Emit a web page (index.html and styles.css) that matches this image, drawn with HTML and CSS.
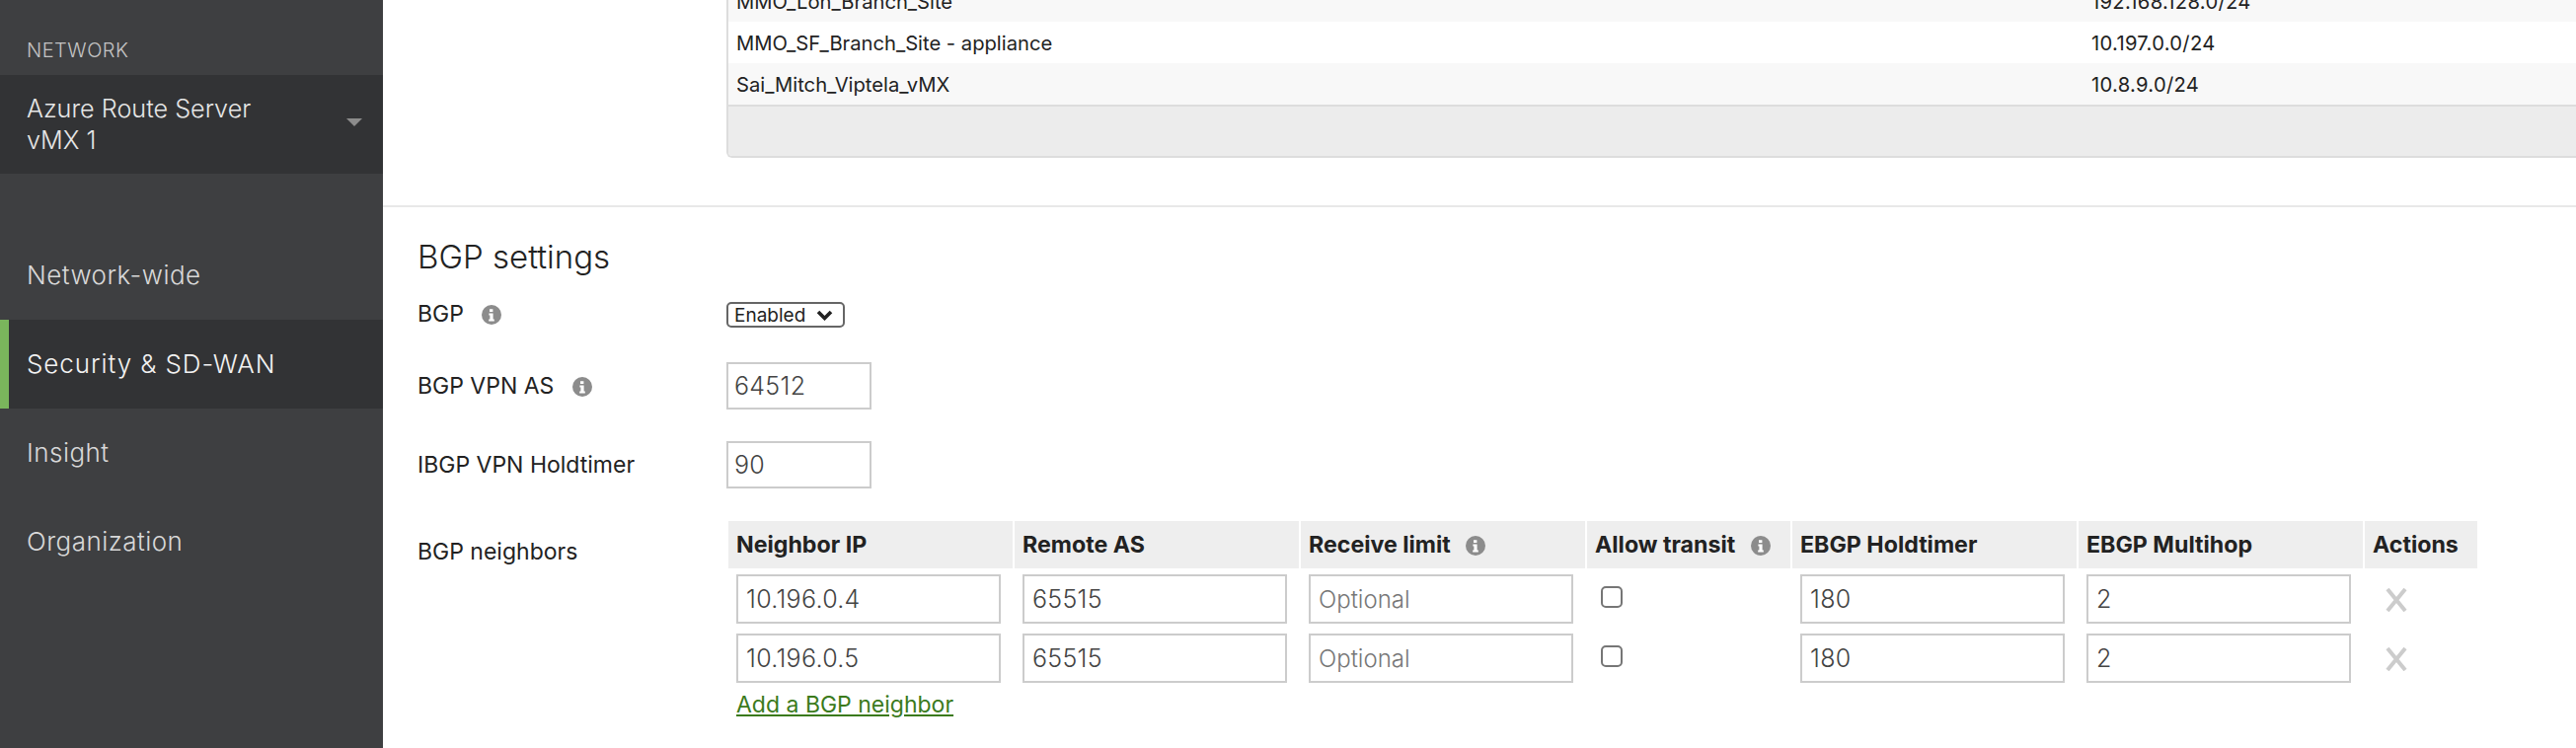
FILE: index.html
```html
<!DOCTYPE html>
<html>
<head>
	<meta charset="utf-8">
	<title>BGP settings</title>
	<link rel="stylesheet" href="styles.css">
</head>
<body>
<div class="page">
	<aside class="sidebar">
		<div class="net-label">NETWORK</div>
		<div class="net-picker">
			<span class="net-name">Azure Route Server<br>vMX 1</span>
			<span class="caret"></span>
		</div>
		<nav class="nav">
			<a class="nav-item" href="#">Network-wide</a>
			<a class="nav-item on" href="#">Security &amp; SD-WAN</a>
			<a class="nav-item" href="#">Insight</a>
			<a class="nav-item" href="#">Organization</a>
		</nav>
	</aside>
	<main class="content">
		<div class="panel">
			<table class="site-table">
				<tr><td class="site-name">MMO_Lon_Branch_Site</td><td class="site-net">192.168.128.0/24</td></tr>
				<tr><td class="site-name">MMO_SF_Branch_Site - appliance</td><td class="site-net">10.197.0.0/24</td></tr>
				<tr><td class="site-name">Sai_Mitch_Viptela_vMX</td><td class="site-net">10.8.9.0/24</td></tr>
			</table>
			<div class="panel-foot"></div>
		</div>
		<section class="bgp">
			<h2 class="bgp-title">BGP settings</h2>
			<div class="form-row row-select">
				<label class="form-label">BGP
					<svg class="info" viewBox="0 0 20 20"><circle cx="10" cy="10" r="10"/><path d="M8 4.2h3.4v2.8H8zM7.4 8.6h4.2v6h1.2v1.8H7.2v-1.8h1.2v-4.2h-1z"/></svg>
				</label>
				<select class="bgp-select"><option>Enabled</option><option>Disabled</option></select>
			</div>
			<div class="form-row row-as">
				<label class="form-label">BGP VPN AS
					<svg class="info" viewBox="0 0 20 20"><circle cx="10" cy="10" r="10"/><path d="M8 4.2h3.4v2.8H8zM7.4 8.6h4.2v6h1.2v1.8H7.2v-1.8h1.2v-4.2h-1z"/></svg>
				</label>
				<input class="text-input short" type="text" value="64512">
			</div>
			<div class="form-row row-hold">
				<label class="form-label">IBGP VPN Holdtimer</label>
				<input class="text-input short" type="text" value="90">
			</div>
			<div class="form-row row-neighbors">
				<label class="form-label">BGP neighbors</label>
				<div>
					<table class="neighbors">
						<tr>
							<th class="wide">Neighbor IP</th>
							<th class="wide">Remote AS</th>
							<th class="wide">Receive limit
								<svg class="info" viewBox="0 0 20 20"><circle cx="10" cy="10" r="10"/><path d="M8 4.2h3.4v2.8H8zM7.4 8.6h4.2v6h1.2v1.8H7.2v-1.8h1.2v-4.2h-1z"/></svg>
							</th>
							<th class="mid">Allow transit
								<svg class="info" viewBox="0 0 20 20"><circle cx="10" cy="10" r="10"/><path d="M8 4.2h3.4v2.8H8zM7.4 8.6h4.2v6h1.2v1.8H7.2v-1.8h1.2v-4.2h-1z"/></svg>
							</th>
							<th class="wide">EBGP Holdtimer</th>
							<th class="wide">EBGP Multihop</th>
							<th class="narrow">Actions</th>
						</tr>
						<tr>
							<td><input class="text-input" type="text" value="10.196.0.4"></td>
							<td><input class="text-input" type="text" value="65515"></td>
							<td><input class="text-input" type="text" placeholder="Optional"></td>
							<td class="check-cell"><input class="check" type="checkbox"></td>
							<td><input class="text-input" type="text" value="180"></td>
							<td><input class="text-input" type="text" value="2"></td>
							<td class="action-cell"><svg class="remove" viewBox="0 0 24 24"><path d="M3 1l18 22M21 1L3 23"/></svg></td>
						</tr>
						<tr>
							<td><input class="text-input" type="text" value="10.196.0.5"></td>
							<td><input class="text-input" type="text" value="65515"></td>
							<td><input class="text-input" type="text" placeholder="Optional"></td>
							<td class="check-cell"><input class="check" type="checkbox"></td>
							<td><input class="text-input" type="text" value="180"></td>
							<td><input class="text-input" type="text" value="2"></td>
							<td class="action-cell"><svg class="remove" viewBox="0 0 24 24"><path d="M3 1l18 22M21 1L3 23"/></svg></td>
						</tr>
					</table>
					<a class="add-link" href="#">Add a BGP neighbor</a>
				</div>
			</div>
		</section>
	</main>
</div>
</body>
</html>
```

FILE: styles.css
```css
* {
	margin: 0;
	padding: 0;
	box-sizing: border-box;
}
html, body {
	height: 100%;
	overflow: hidden;
}
body {
	font-family: Inter, "Liberation Sans", sans-serif;
	font-size: 23px;
	color: #222;
	background: #fff;
}
.page {
	display: flex;
	height: 758px;
}

/* sidebar */
.sidebar {
	width: 388px;
	flex: none;
	background: #3e3f41;
	color: #d8d8d8;
}
.net-label {
	height: 76px;
	padding: 36px 0 0 27px;
	font-size: 20px;
	line-height: 30px;
	font-weight: 300;
	letter-spacing: .5px;
	color: #c4c4c4;
}
.net-picker {
	height: 100px;
	padding: 0 21px 0 27px;
	display: flex;
	align-items: center;
	justify-content: space-between;
	background: #323335;
	font-size: 25.2px;
	line-height: 32px;
	font-weight: 300;
	color: #e6e6e6;
}
.caret {
	width: 0;
	height: 0;
	margin-top: -4px;
	border-left: 8px solid transparent;
	border-right: 8px solid transparent;
	border-top: 8px solid #8c8c8c;
}
.nav {
	padding-top: 58px;
}
.nav-item {
	display: block;
	height: 90px;
	line-height: 90px;
	padding-left: 27px;
	font-size: 26px;
	font-weight: 300;
	letter-spacing: .45px;
	color: #d8d8d8;
	text-decoration: none;
}
.nav-item.on {
	padding-left: 18px;
	border-left: 9px solid #7ab55c;
	background: #323335;
	letter-spacing: .9px;
	color: #f2f2f2;
}

/* top panel */
.content {
	flex: 1;
	min-width: 0;
}
.panel {
	margin: -20px 0 48px 348px;
	border-left: 2px solid #ddd;
	border-bottom: 2px solid #ddd;
	border-bottom-left-radius: 6px;
	overflow: hidden;
}
.site-table {
	width: 100%;
	border-collapse: collapse;
	font-size: 20.2px;
}
.site-table td {
	height: 42px;
	padding-left: 8px;
}
.site-table .site-name {
	width: 1373px;
}
.site-table .site-net {
	letter-spacing: .3px;
}
.site-table tr:nth-child(odd) {
	background: #f8f8f8;
}
.panel-foot {
	height: 52px;
	border-top: 2px solid #ddd;
	background: #ececec;
}

/* bgp form */
.bgp {
	border-top: 2px solid #e8e8e8;
	padding: 30px 0 0 35px;
}
.bgp-title {
	font-size: 33px;
	line-height: 40px;
	font-weight: 300;
}
.form-row {
	display: flex;
	align-items: center;
}
.form-label {
	width: 313px;
	flex: none;
}
.info {
	width: 20px;
	height: 20px;
	margin-left: 12px;
	vertical-align: -3px;
	fill: #8c8c8c;
}
.info path {
	fill: #fff;
}
.row-select {
	margin-top: 26px;
	height: 26px;
}
.row-select .form-label {
	margin-top: -3px;
}
.row-as {
	margin-top: 35px;
}
.row-hold {
	margin-top: 32px;
}
.row-neighbors {
	margin-top: 33px;
	align-items: flex-start;
}
.row-neighbors .form-label {
	padding-top: 15px;
	line-height: 32px;
}
.bgp-select {
	appearance: none;
	width: 120px;
	height: 26px;
	padding-left: 6px;
	font-family: inherit;
	font-size: 19px;
	color: #222;
	background: #fff url("data:image/svg+xml,%3Csvg xmlns='http://www.w3.org/2000/svg' viewBox='0 0 17 11'%3E%3Cpath d='M2 2l6.5 6.5L15 2' fill='none' stroke='%23222' stroke-width='3.6'/%3E%3C/svg%3E") no-repeat right 10px center / 17px 11px;
	border: 2px solid #666;
	border-radius: 5px;
}
.text-input {
	display: block;
	width: 268px;
	height: 50px;
	padding: 0 8px;
	border: 2px solid #ccc;
	font-family: inherit;
	font-size: 25px;
	font-weight: 300;
	letter-spacing: .3px;
	color: #444;
	background: #fff;
}
.text-input.short {
	width: 147px;
	height: 48px;
	padding: 0 6px;
}
.text-input::placeholder {
	font-size: 24px;
	letter-spacing: 0;
	color: #777;
}

/* neighbors table */
.neighbors {
	border-collapse: separate;
	border-spacing: 2px 0;
	table-layout: fixed;
	width: 1774px;
}
.neighbors th {
	height: 48px;
	padding: 0 0 1px 8px;
	background: #eee;
	font-size: 23.2px;
	font-weight: 700;
	text-align: left;
	white-space: nowrap;
}
.neighbors th .info {
	margin-left: 10px;
}
.neighbors .wide {
	width: 288px;
}
.neighbors .mid {
	width: 206px;
}
.neighbors .narrow {
	width: 114px;
}
.neighbors td {
	padding: 6px 8px 4px;
	vertical-align: top;
}
.check {
	display: block;
	appearance: none;
	width: 22px;
	height: 22px;
	margin: 12px 0 0 6px;
	border: 2px solid #767676;
	border-radius: 5px;
	background: #fff;
}
.remove {
	display: block;
	width: 24px;
	height: 24px;
	margin: 14px 0 0 12px;
	fill: none;
	stroke: #ccc;
	stroke-width: 4;
}
.add-link {
	display: block;
	width: max-content;
	margin-left: 10px;
	line-height: 36px;
	color: #3b7a1c;
	text-decoration: underline;
}
```
